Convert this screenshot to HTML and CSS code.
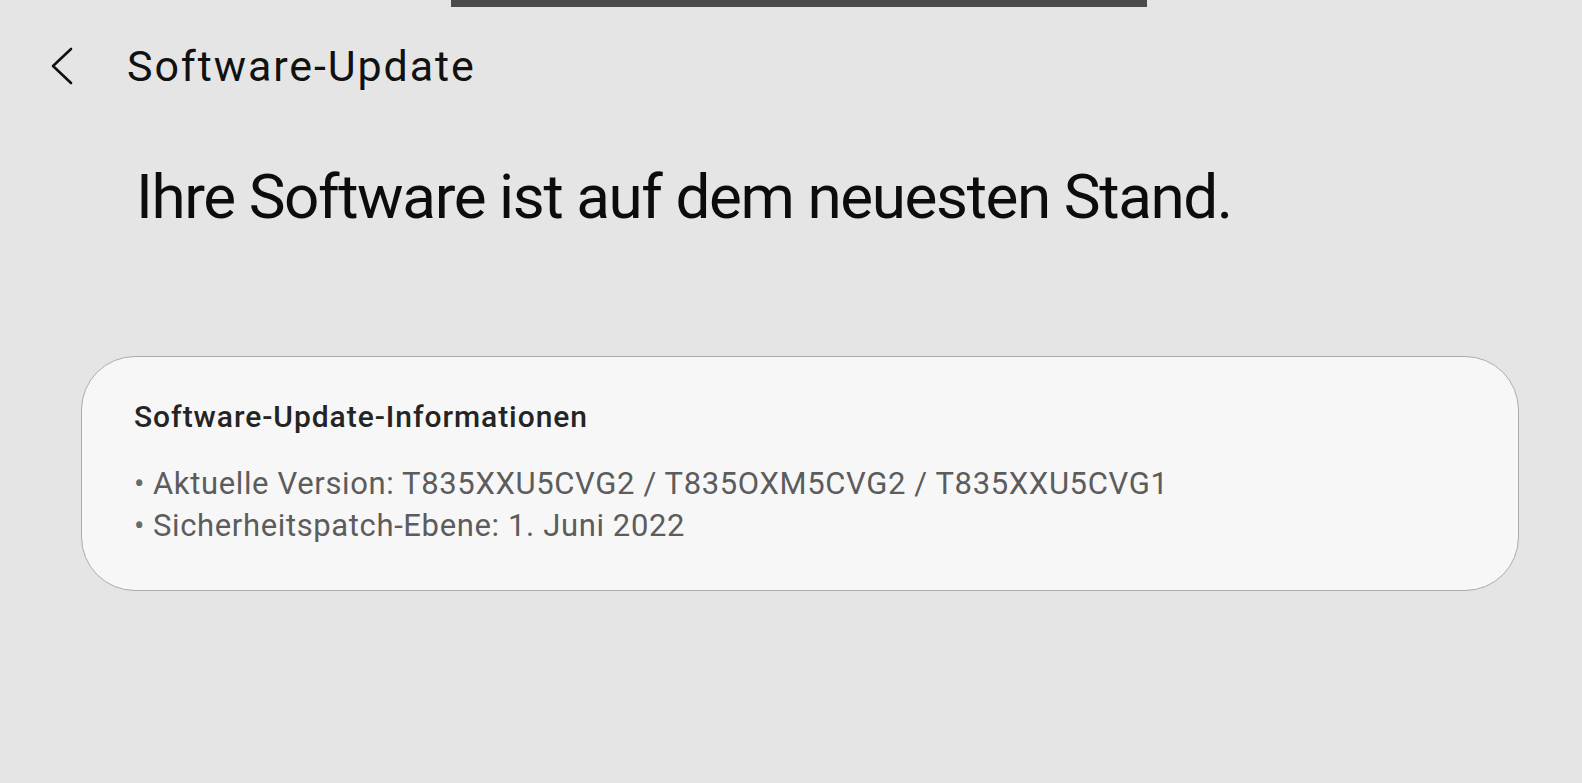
FILE: index.html
```html
<!DOCTYPE html>
<html lang="de">
<head>
  <meta charset="UTF-8">
  <meta name="viewport" content="width=device-width, initial-scale=1">
  <title>Software-Update</title>
  <link rel="stylesheet" href="styles.css">
</head>
<body>
  <div class="status-strip"></div>

  <header class="appbar">
    <svg class="back" width="24" height="38" viewBox="0 0 24 38" aria-hidden="true">
      <polyline points="21,2 3,19 21,36" fill="none" stroke="#111" stroke-width="2.6" stroke-linecap="round" stroke-linejoin="round"/>
    </svg>
    <span class="title">Software-Update</span>
  </header>

  <main class="content">
    <h1 class="state">Ihre Software ist auf dem neuesten Stand.</h1>

    <section class="card">
      <h2>Software-Update-Informationen</h2>
      <ul class="info">
        <li>Aktuelle Version: T835XXU5CVG2 / T835OXM5CVG2 / T835XXU5CVG1</li>
        <li>Sicherheitspatch-Ebene: 1. Juni 2022</li>
      </ul>
    </section>
  </main>
</body>
</html>
```

FILE: styles.css
```css
body {
  margin: 0;
  background: #e5e5e5;
  font-family: 'Roboto', 'Liberation Sans', sans-serif;
  color: #111;
}
.status-strip {
  margin-left: 451px;
  width: 696px;
  height: 7px;
  background: #4b4b4b;
}
.appbar {
  display: flex;
  align-items: center;
  gap: 53px;
  padding: 34px 0 0 50px;
}
.back {
  display: block;
}
.title {
  font-size: 43px;
  line-height: 50px;
  letter-spacing: 1.9px;
  color: #111;
}
.content {
  padding: 0 63px 0 81px;
}
.state {
  margin: 70px 0 0 55px;
  font-size: 62px;
  line-height: 72px;
  font-weight: 400;
  letter-spacing: -1.4px;
  color: #0c0c0c;
}
.card {
  margin-top: 123px;
  padding: 42px 52px 43px;
  background: #f7f7f7;
  border: 1px solid #ababab;
  border-radius: 54px;
}
.card h2 {
  margin: 0;
  font-size: 30px;
  line-height: 36px;
  font-weight: 500;
  letter-spacing: 0.95px;
  color: #242424;
}
.info {
  list-style: none;
  margin: 28px 0 0;
  padding: 0;
  font-size: 31px;
  line-height: 42px;
  letter-spacing: 0.63px;
  color: #5c5c5c;
}
.info li::before {
  content: "\2022";
  display: inline-block;
  width: 19px;
  color: #6a6a6a;
}
```
